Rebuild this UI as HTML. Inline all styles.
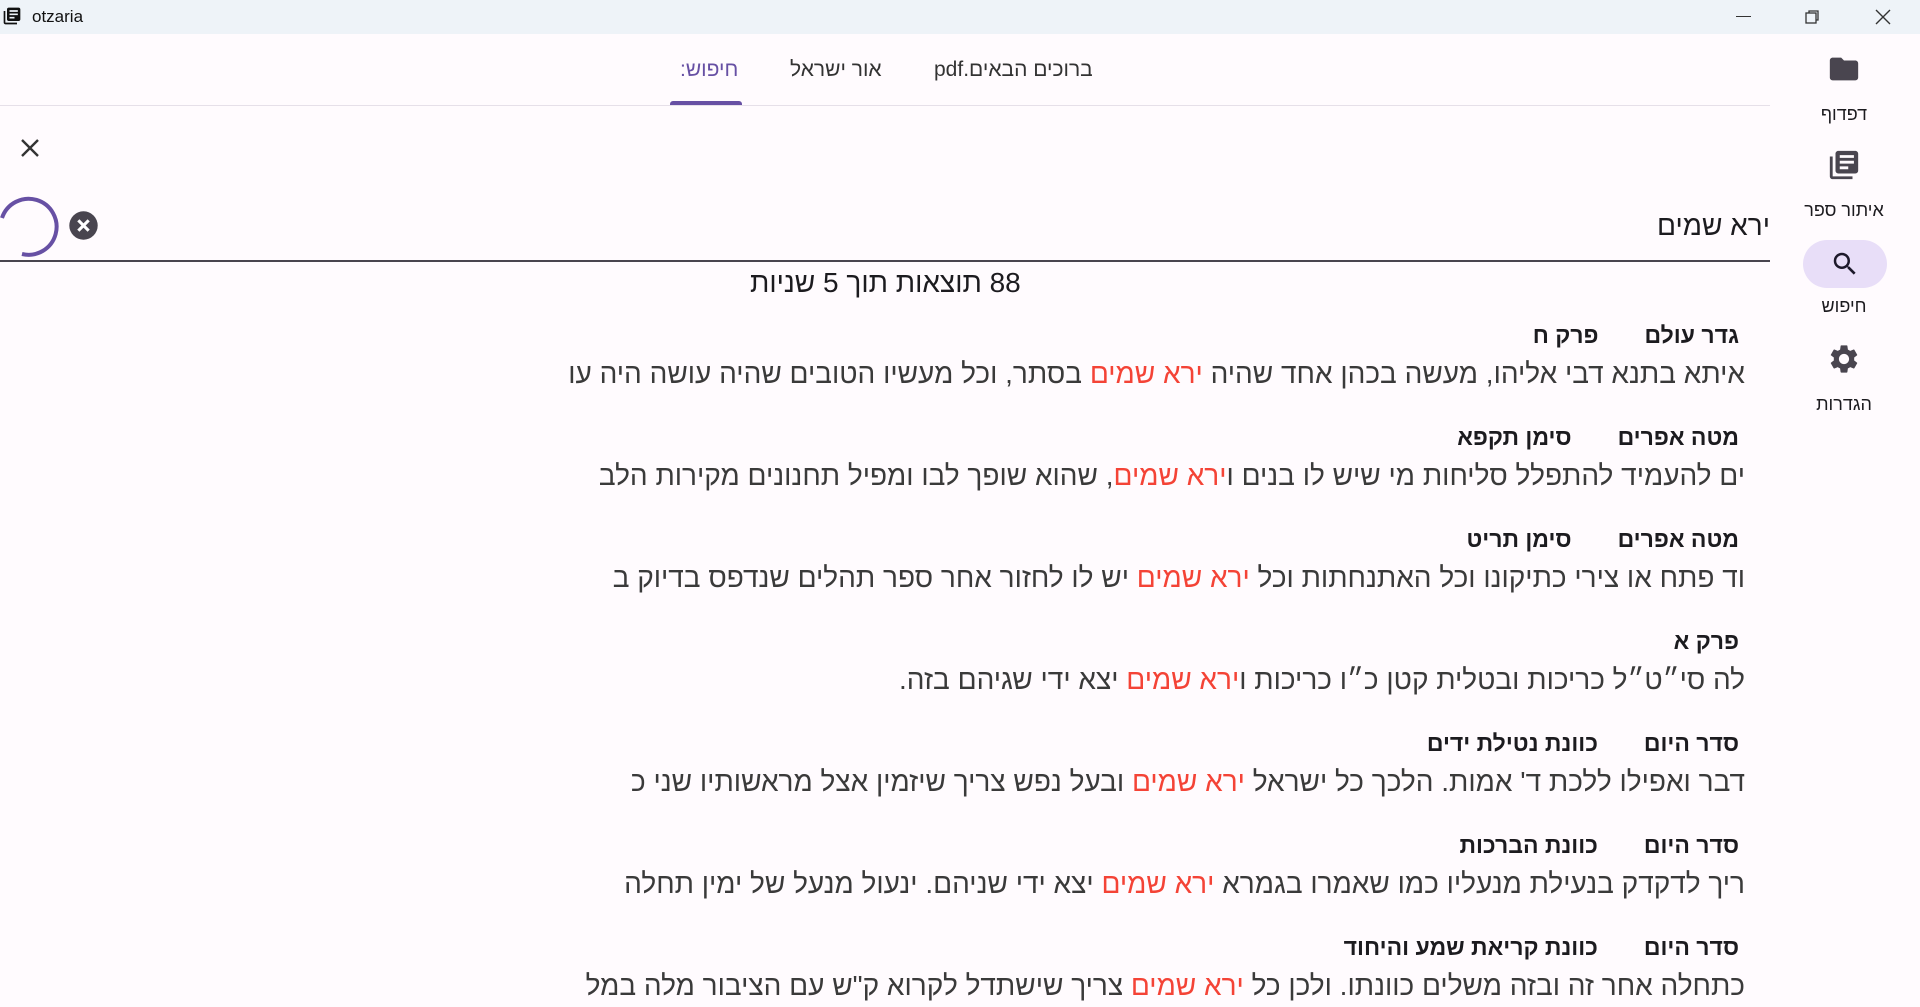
<!DOCTYPE html>
<html><head><meta charset="utf-8"><style>
*{margin:0;padding:0;box-sizing:border-box}
body{width:1920px;height:1007px;overflow:hidden;background:#fffbfe;font-family:"Liberation Sans","Noto Sans CJK SC",sans-serif;position:relative;color:#1c1b1f}
.tb{position:absolute;left:0;top:0;width:1920px;height:34px;background:#eef3f8}
.tb .t{position:absolute;left:32px;top:7px;font-size:17px;color:#111}
.abs{position:absolute}
.tab{position:absolute;top:58px;font-size:21px;color:#333;white-space:nowrap;direction:rtl}
.side{position:absolute;width:120px;left:1784px;text-align:center;font-size:18px;color:#1c1b1f}
.res{position:absolute;right:175px;width:1300px;text-align:right;direction:rtl;white-space:nowrap;overflow:hidden}
.res .h{font-weight:bold;font-size:23px;color:#1c1b1f;margin-right:6px}
.res .h span{margin-left:46px}
.res .b{font-size:28px;color:#3a3a3a;margin-top:9px}
.res .b em{font-style:normal;color:#f44336}
</style></head><body>
<div class="tb">
<svg class="abs" style="left:2px;top:6px" width="20" height="20" viewBox="0 0 24 24"><path fill="#111" d="M4 6H2v14c0 1.1.9 2 2 2h14v-2H4V6zm16-4H8c-1.1 0-2 .9-2 2v12c0 1.1.9 2 2 2h12c1.1 0 2-.9 2-2V4c0-1.1-.9-2-2-2zm-1 9H9V9h10v2zm-4 4H9v-2h6v2zm4-8H9V5h10v2z"/></svg>
<div class="t">otzaria</div>
<div class="abs" style="left:1736px;top:16px;width:15px;height:1px;background:#333"></div>
<svg class="abs" style="left:1804px;top:9px" width="16" height="16" viewBox="0 0 16 16"><rect x="2" y="4" width="10" height="10" fill="none" stroke="#333" stroke-width="1.3"/><path d="M5 4V2h9v9h-2" fill="none" stroke="#333" stroke-width="1.3"/></svg>
<svg class="abs" style="left:1875px;top:9px" width="16" height="16" viewBox="0 0 16 16"><path d="M1 1L15 15M15 1L1 15" stroke="#333" stroke-width="1.4"/></svg>
</div>
<div class="tab" style="left:680px;color:#6750a4">חיפוש:</div>
<div class="tab" style="left:790px">אור ישראל</div>
<div class="tab" style="left:934px">ברוכים הבאים.pdf</div>
<div class="abs" style="left:670px;top:101px;width:72px;height:4px;background:#6750a4;border-radius:3px 3px 0 0"></div>
<div class="abs" style="left:0;top:105px;width:1770px;height:1px;background:#e6e0e9"></div>
<svg class="abs" style="left:18px;top:136px" width="24" height="24" viewBox="0 0 24 24"><path d="M4 4L20 20M20 4L4 20" stroke="#333" stroke-width="2.4"/></svg>
<svg class="abs" style="left:-4px;top:194px" width="64" height="64" viewBox="0 0 64 64"><path d="M6 24 A28 28 0 1 1 26 60" fill="none" stroke="#6750a4" stroke-width="4"/></svg>
<svg class="abs" style="left:68px;top:210px" width="31" height="31" viewBox="0 0 24 24"><circle cx="12" cy="12" r="11" fill="#49454f"/><path d="M8 8L16 16M16 8L8 16" stroke="#fff" stroke-width="2.4"/></svg>
<div class="abs" style="right:150px;top:210px;font-size:28px;color:#1c1b1f">ירא שמים</div>
<div class="abs" style="left:0;top:260px;width:1770px;height:2px;background:#49454f"></div>
<div class="abs" style="left:750px;top:267px;font-size:28px;direction:rtl;color:#1c1b1f">88 תוצאות תוך 5 שניות</div>

<div class="side" style="top:52px"><svg width="34" height="34" viewBox="0 0 24 24"><path fill="#49454f" d="M10 4H4c-1.1 0-2 .9-2 2v12c0 1.1.9 2 2 2h16c1.1 0 2-.9 2-2V8c0-1.1-.9-2-2-2h-8l-2-2z"/></svg><div style="margin-top:13px">דפדוף</div></div>
<div class="side" style="top:148px"><svg width="34" height="34" viewBox="0 0 24 24"><path fill="#49454f" d="M4 6H2v14c0 1.1.9 2 2 2h14v-2H4V6zm16-4H8c-1.1 0-2 .9-2 2v12c0 1.1.9 2 2 2h12c1.1 0 2-.9 2-2V4c0-1.1-.9-2-2-2zm-1 9H9V9h10v2zm-4 4H9v-2h6v2zm4-8H9V5h10v2z"/></svg><div style="margin-top:13px">איתור ספר</div></div>
<div class="abs" style="left:1803px;top:240px;width:84px;height:48px;border-radius:24px;background:#e8def8"></div>
<svg class="abs" style="left:1830px;top:249px" width="30" height="30" viewBox="0 0 24 24"><path fill="#1d192b" d="M15.5 14h-.79l-.28-.27A6.470 6.470 0 0 0 16 9.5 6.5 6.5 0 1 0 9.5 16c1.61 0 3.09-.59 4.23-1.57l.27.28v.79l5 4.99L20.49 19l-4.99-5zm-6 0C7.01 14 5 11.99 5 9.5S7.01 5 9.5 5 14 7.01 14 9.5 11.99 14 9.5 14z"/></svg>
<div class="side" style="top:296px">חיפוש</div>
<div class="side" style="top:342px"><svg width="34" height="34" viewBox="0 0 24 24"><path fill="#49454f" d="M19.14 12.94c.04-.3.06-.61.06-.94 0-.32-.02-.64-.07-.94l2.03-1.58a.49.49 0 0 0 .12-.61l-1.92-3.32a.488.488 0 0 0-.59-.22l-2.39.96c-.5-.38-1.03-.7-1.62-.94l-.36-2.54a.484.484 0 0 0-.48-.41h-3.84c-.24 0-.43.17-.47.41l-.36 2.54c-.59.24-1.13.57-1.62.94l-2.39-.96c-.22-.08-.47 0-.59.22L2.74 8.87c-.12.21-.08.47.12.61l2.03 1.58c-.05.3-.09.63-.09.94s.02.64.07.94l-2.03 1.58a.49.49 0 0 0-.12.61l1.92 3.32c.12.22.37.29.59.22l2.39-.96c.5.38 1.030.7 1.62.94l.36 2.54c.05.24.24.41.48.41h3.84c.24 0 .44-.17.47-.41l.36-2.54c.59-.24 1.13-.56 1.62-.94l2.39.96c.22.08.47 0 .59-.22l1.92-3.32c.12-.22.07-.47-.12-.61l-2.01-1.58zM12 15.6c-1.98 0-3.6-1.62-3.6-3.6s1.62-3.6 3.6-3.6 3.6 1.62 3.6 3.6-1.62 3.6-3.6 3.6z"/></svg><div style="margin-top:13px">הגדרות</div></div>

<div class="res" style="top:322px"><div class="h"><span>גדר עולם</span>פרק ח</div><div class="b">איתא בתנא דבי אליהו, מעשה בכהן אחד שהיה <em>ירא שמים</em> בסתר, וכל מעשיו הטובים שהיה עושה היה עו</div></div>
<div class="res" style="top:424px"><div class="h"><span>מטה אפרים</span>סימן תקפא</div><div class="b">ים להעמיד להתפלל סליחות מי שיש לו בנים ו<em>ירא שמים</em>, שהוא שופך לבו ומפיל תחנונים מקירות הלב</div></div>
<div class="res" style="top:526px"><div class="h"><span>מטה אפרים</span>סימן תריט</div><div class="b">וד פתח או צירי כתיקונו וכל האתנחתות וכל <em>ירא שמים</em> יש לו לחזור אחר ספר תהלים שנדפס בדיוק ב</div></div>
<div class="res" style="top:628px"><div class="h">פרק א</div><div class="b">לה סי״ט״ל כריכות ובטלית קטן כ״ו כריכות ו<em>ירא שמים</em> יצא ידי שגיהם בזה.</div></div>
<div class="res" style="top:730px"><div class="h"><span>סדר היום</span>כוונת נטילת ידים</div><div class="b">דבר ואפילו ללכת ד' אמות. הלכך כל ישראל <em>ירא שמים</em> ובעל נפש צריך שיזמין אצל מראשותיו שני כ</div></div>
<div class="res" style="top:832px"><div class="h"><span>סדר היום</span>כוונת הברכות</div><div class="b">ריך לדקדק בנעילת מנעליו כמו שאמרו בגמרא <em>ירא שמים</em> יצא ידי שניהם. ינעול מנעל של ימין תחלה</div></div>
<div class="res" style="top:934px"><div class="h"><span>סדר היום</span>כוונת קריאת שמע והיחוד</div><div class="b">כתחלה אחר זה ובזה משלים כוונתו. ולכן כל <em>ירא שמים</em> צריך שישתדל לקרוא ק"ש עם הציבור מלה במל</div></div>
</body></html>
